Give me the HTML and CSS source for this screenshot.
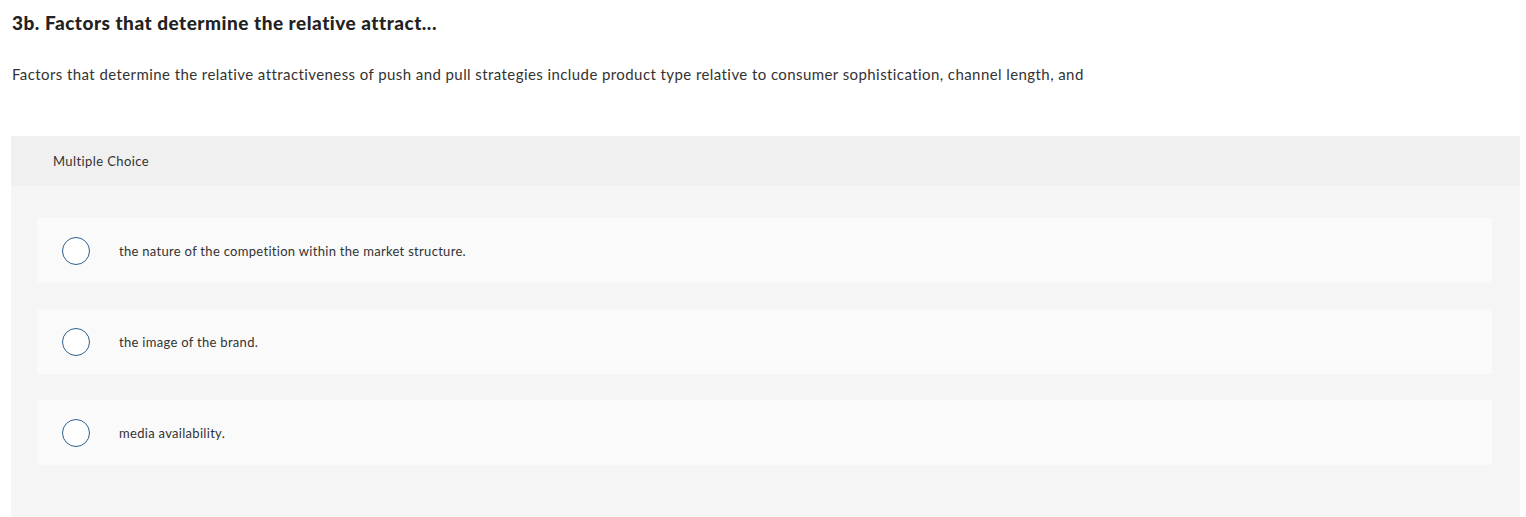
FILE: index.html
```html
<!DOCTYPE html>
<html lang="en">
<head>
    <meta charset="UTF-8">
    <meta name="viewport" content="width=device-width, initial-scale=1.0">
    <title>3b. Factors that determine the relative attract...</title>
    <link rel="stylesheet" href="styles.css">
</head>
<body>
    <div class="question">
        <h1 class="question-title">3b. Factors that determine the relative attract...</h1>
        <p class="question-text">Factors that determine the relative attractiveness of push and pull strategies include product type relative to consumer sophistication, channel length, and</p>

        <div class="choice-panel">
            <div class="choice-header">Multiple Choice</div>
            <div class="choice-list">
                <label class="choice">
                    <span class="radio"></span>
                    <span class="choice-text">the nature of the competition within the market structure.</span>
                </label>
                <label class="choice">
                    <span class="radio"></span>
                    <span class="choice-text">the image of the brand.</span>
                </label>
                <label class="choice">
                    <span class="radio"></span>
                    <span class="choice-text">media availability.</span>
                </label>
            </div>
        </div>
    </div>
</body>
</html>
```

FILE: styles.css
```css
body {
    font-family: Lato, "Liberation Sans", sans-serif;
    margin: 0;
    background-color: #fff;
    color: #333;
}
.question {
    padding: 0 6px 0 11px;
}
.question-title {
    font-size: 19px;
    font-weight: 900;
    letter-spacing: 0.5px;
    color: #222;
    margin: 0;
    padding: 12px 1px 0;
    line-height: 22px;
}
.question-text {
    font-size: 15px;
    letter-spacing: 0.42px;
    margin: 0;
    padding: 30px 1px 0;
    line-height: 20px;
    color: #333;
}
.choice-panel {
    margin-top: 52px;
    background-color: #f5f5f5;
    padding-bottom: 60px;
}
.choice-header {
    background-color: #f0f0f0;
    height: 50px;
    line-height: 50px;
    padding-left: 42px;
    font-size: 13px;
    letter-spacing: 0.4px;
    color: #333;
}
.choice-list {
    display: flex;
    flex-direction: column;
    gap: 26px;
    padding: 32px 28px 0 26px;
}
.choice {
    display: flex;
    align-items: center;
    height: 65px;
    background-color: #fafafa;
    border-radius: 3px;
    padding-left: 25px;
    cursor: pointer;
}
.radio {
    width: 26px;
    height: 26px;
    border: 1.5px solid #2c5f8f;
    border-radius: 50%;
    flex-shrink: 0;
    background-color: #fff;
}
.choice-text {
    margin-left: 29px;
    font-size: 13px;
    letter-spacing: 0.3px;
    color: #333;
}
```
